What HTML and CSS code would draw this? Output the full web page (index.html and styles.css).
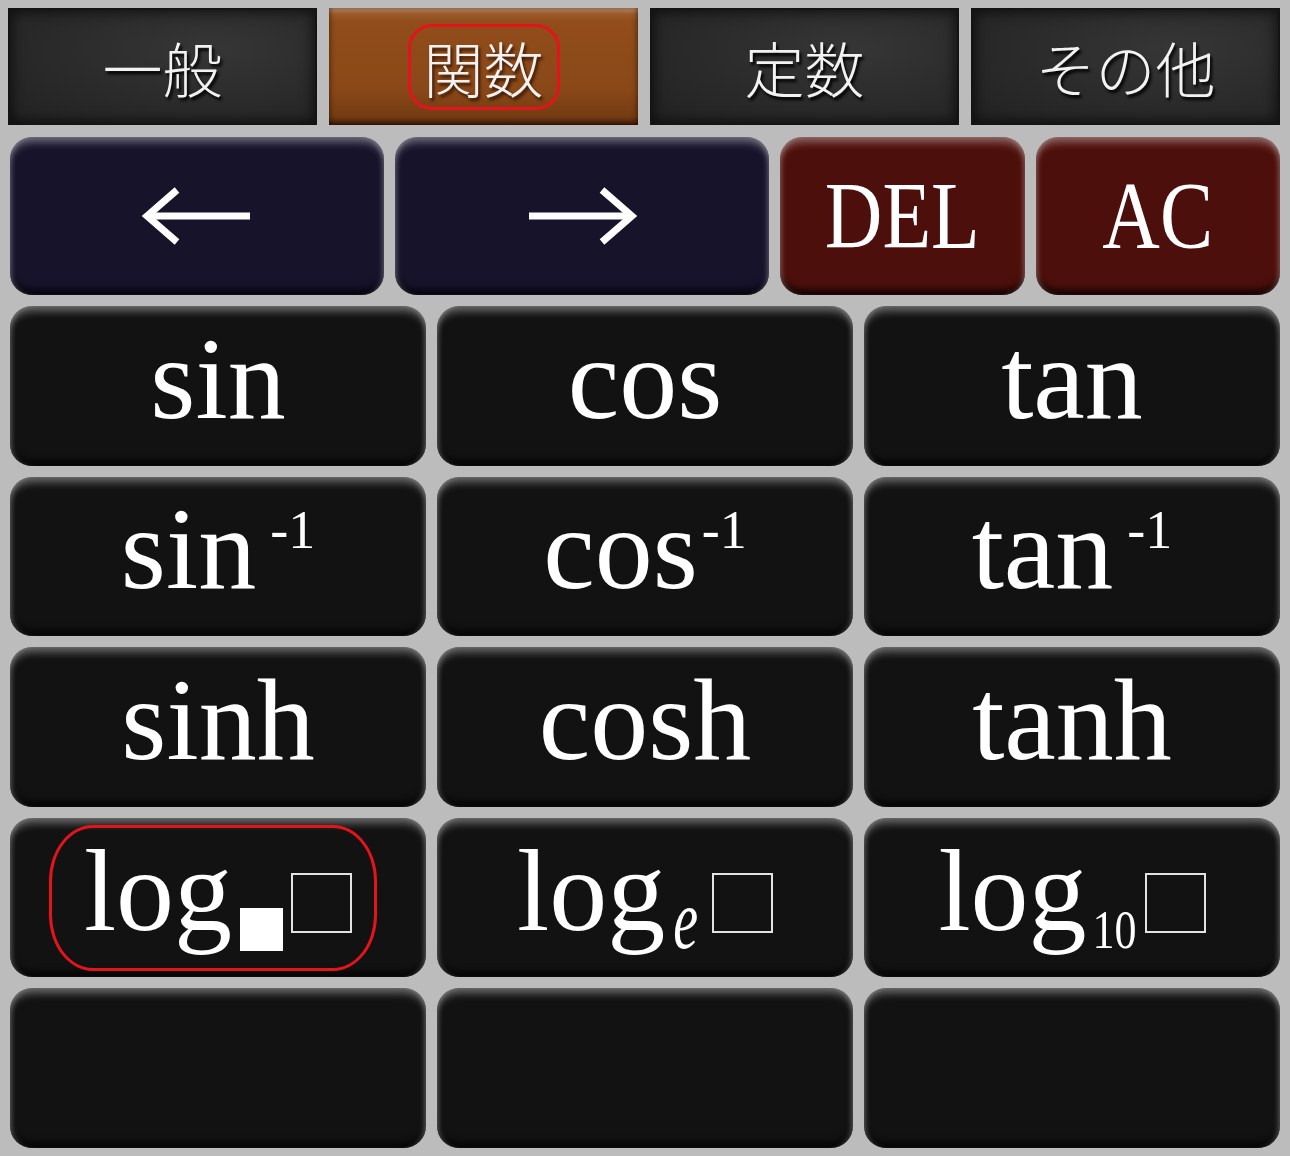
FILE: index.html
```html
<!DOCTYPE html>
<html lang="ja">
<head>
  <meta charset="UTF-8">
  <meta name="viewport" content="width=device-width, initial-scale=1.0">
  <title>関数キーボード</title>
  <link rel="stylesheet" href="styles.css">
</head>
<body>
<div class="pad">
  <nav class="tabs">
    <div class="tab">一般</div>
    <div class="tab on"><span class="mark-tab">関数</span></div>
    <div class="tab">定数</div>
    <div class="tab">その他</div>
  </nav>
  <div class="keys">
    <div class="row-top">
      <button class="key navy" aria-label="left">
        <svg width="110" height="60" viewBox="0 0 110 60">
          <rect x="6" y="26.5" width="102" height="7" fill="#fff"/>
          <path d="M35 4 L5 30 L35 56" fill="none" stroke="#fff" stroke-width="7" stroke-linejoin="miter"/>
        </svg>
      </button>
      <button class="key navy" aria-label="right">
        <svg width="110" height="60" viewBox="0 0 110 60">
          <rect x="2" y="26.5" width="102" height="7" fill="#fff"/>
          <path d="M75 4 L105 30 L75 56" fill="none" stroke="#fff" stroke-width="7" stroke-linejoin="miter"/>
        </svg>
      </button>
      <button class="key red"><span class="cap">DEL</span></button>
      <button class="key red"><span class="cap">AC</span></button>
    </div>
    <div class="grid">
      <button class="key"><span class="fn">sin</span></button>
      <button class="key"><span class="fn">cos</span></button>
      <button class="key"><span class="fn">tan</span></button>

      <button class="key"><span class="fn">sin<sup class="inv">-1</sup></span></button>
      <button class="key"><span class="fn">cos<sup class="inv tight">-1</sup></span></button>
      <button class="key"><span class="fn">tan<sup class="inv">-1</sup></span></button>

      <button class="key"><span class="fn">sinh</span></button>
      <button class="key"><span class="fn">cosh</span></button>
      <button class="key"><span class="fn">tanh</span></button>

      <button class="key">
        <span class="mark-log"><span class="fn">log<span class="base-fill"></span><span class="slot"></span></span></span>
      </button>
      <button class="key"><span class="fn">log<span class="sub e">e</span><span class="slot"></span></span></button>
      <button class="key"><span class="fn">log<span class="sub ten">10</span><span class="slot"></span></span></button>

      <button class="key"></button>
      <button class="key"></button>
      <button class="key"></button>
    </div>
  </div>
</div>
</body>
</html>
```

FILE: styles.css
```css
:root {
  --bg: #bcbcbc;
  --key: #121212;
  --navy: #16132b;
  --red: #4d0f0b;
  --mark: #e3141c;
}
* { box-sizing: border-box; }
body { margin: 0; background: var(--bg); }
.pad { height: 1156px; padding: 8px 10px 8px 8px; display: flex; flex-direction: column; gap: 12px; }

.tabs { display: grid; grid-template-columns: repeat(4, 1fr); gap: 12px; height: 117px; }
.tab {
  display: flex; align-items: center; justify-content: center;
  background: radial-gradient(ellipse at 65% 35%, #363636 0, #2a2a2a 55%, #222 100%);
  box-shadow: inset 0 0 0 2px #141414, inset 0 0 12px 5px rgba(0,0,0,0.55);
  color: #f2f2f2; font-family: "Noto Sans CJK JP", sans-serif; font-weight: 300; font-size: 60px;
  text-shadow: 2px 3px 3px #000;
}
.tab.on {
  background: linear-gradient(#b58a68 0, #9a5a2a 6px, #914d1b 14px, #8a4818 70%, #743b12 calc(100% - 8px), #3a1a07 100%);
  box-shadow: inset 3px 0 4px -1px rgba(0,0,0,0.35), inset -3px 0 4px -1px rgba(0,0,0,0.35);
  text-shadow: 2px 3px 3px #3a1a07;
}
.mark-tab { display: inline-flex; align-items: center; height: 86px; padding: 0 13px; border: 3px solid var(--mark); border-radius: 24px; }

.keys { flex: 1; margin-left: 2px; display: flex; flex-direction: column; gap: 11px; }
.row-top { display: grid; grid-template-columns: 374px 374px 1fr 1fr; gap: 11px; height: 158px; }
.grid { flex: 1; display: grid; grid-template-columns: repeat(3, 1fr); grid-template-rows: repeat(5, 1fr); gap: 11px; }

.key {
  border: 0; padding: 0; margin: 0; color: #fff; cursor: pointer;
  display: flex; align-items: center; justify-content: center;
  background: var(--key); border-radius: 22px;
  box-shadow:
    inset 0 9px 8px -4px rgba(255,255,255,0.38),
    inset 5px 0 5px -3px rgba(255,255,255,0.22),
    inset -5px 0 5px -3px rgba(255,255,255,0.22),
    inset 0 -10px 6px -4px rgba(0,0,0,0.7);
  font-family: "Liberation Serif", "Times New Roman", serif;
}
.key.navy { background: var(--navy); }
.key.red { background: var(--red); }

.cap { font-size: 96px; line-height: 1; display: inline-block; transform: scaleX(0.83); }

.fn { font-size: 116px; line-height: 1; height: 116px; display: inline-block; margin-bottom: 14px; white-space: nowrap; }
.inv { font-size: 54px; line-height: 0; vertical-align: 40px; margin-left: 14px; }
.inv.tight { margin-left: 4px; }

.sub { display: inline-block; line-height: 1; vertical-align: -18px; transform-origin: 50% 84%; }
.sub.e { font-size: 56px; font-style: italic; transform: scaleY(1.5); margin-left: 8px; }
.sub.ten { font-size: 44px; transform: scaleY(1.26); margin-left: 6px; }

.slot { display: inline-block; width: 61px; height: 60px; border: 2px solid #e2e2e2; vertical-align: -3px; margin-left: 12px; }
.sub.e + .slot { margin-left: 14px; }
.sub.ten + .slot { margin-left: 8px; }
.base-fill { display: inline-block; width: 43px; height: 43px; background: #fff; vertical-align: -21px; margin-left: 8px; }
.base-fill + .slot { margin-left: 8px; }

.mark-log {
  display: inline-flex; align-items: center; height: 146px; margin-right: 10px;
  padding: 0 22px 0 32px; border: 3px solid var(--mark); border-radius: 44px / 56px;
}
.mark-log .fn { margin-bottom: 14px; }
```
